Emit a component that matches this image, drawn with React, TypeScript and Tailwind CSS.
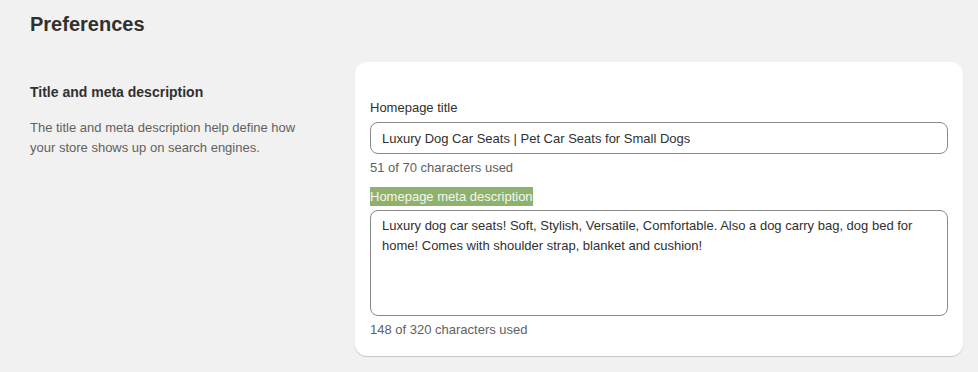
import React from "react";

const App: React.FC = () => {
	return (
		<div
			className="min-h-[372px] w-full bg-[#f1f1f1] pl-[30px] pr-[15px] pt-[10px] text-[#303030]"
			style={{ fontFamily: '"Liberation Sans", Arial, sans-serif' }}
		>
			<h1 className="text-[20px] leading-[28px] font-bold">Preferences</h1>

			<div className="mt-[24px] flex">
				{/* left: section description */}
				<div className="w-[325px] shrink-0 pt-[20px] pr-[50px]">
					<h2 className="text-[14px] leading-[20px] font-bold">
						Title and meta description
					</h2>
					<p className="mt-[16px] text-[13px] leading-[20px] text-[#616161]">
						The title and meta description help define how your store shows up on
						search engines.
					</p>
				</div>

				{/* right: card */}
				<div className="flex-1 rounded-[12px] bg-white px-[15px] pt-[37px] pb-[16px] shadow-[0_1px_0_0_rgba(26,26,26,0.07),0_1px_1px_0_rgba(0,0,0,0.12)]">
					<label className="block text-[13px] leading-[18px] text-[#303030]">
						Homepage title
					</label>
					<input
						className="mt-[5px] h-[32px] w-full rounded-[8px] border border-[#8a8a8a] bg-white px-[11px] text-[13px] text-[#303030] outline-none"
						style={{ fontFamily: '"Liberation Sans", Arial, sans-serif' }}
						defaultValue="Luxury Dog Car Seats | Pet Car Seats for Small Dogs"
					/>
					<div className="mt-[4px] text-[13px] leading-[20px] text-[#616161]">
						51 of 70 characters used
					</div>

					<label className="mt-[9px] inline-block bg-[#8fb16e] text-[13px] leading-[19px] text-[#f4f7ef]">
						Homepage meta description
					</label>
					<textarea
						className="mt-[2px] block h-[106px] w-full resize-none rounded-[8px] border border-[#8a8a8a] bg-white px-[11px] pt-[5px] pb-[3px] text-[13px] leading-[20px] text-[#303030] outline-none"
						style={{ fontFamily: '"Liberation Sans", Arial, sans-serif' }}
						defaultValue="Luxury dog car seats! Soft, Stylish, Versatile, Comfortable. Also a dog carry bag, dog bed for home! Comes with shoulder strap, blanket and cushion!"
					/>
					<div className="mt-[4px] text-[13px] leading-[20px] text-[#616161]">
						148 of 320 characters used
					</div>
				</div>
			</div>
		</div>
	);
};

export default App;
